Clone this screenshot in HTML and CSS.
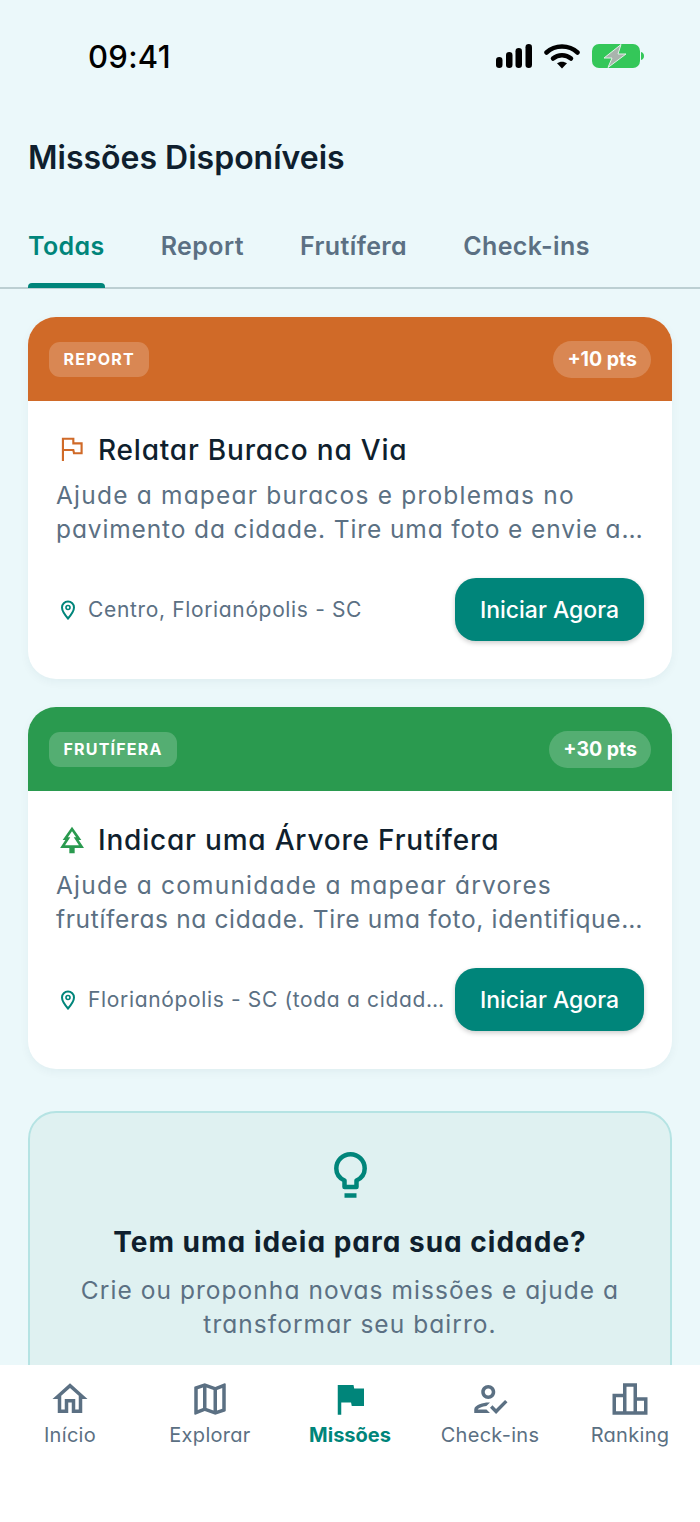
FILE: index.html
```html
<!DOCTYPE html>
<html lang="pt-BR">
<head>
    <meta charset="UTF-8">
    <meta name="viewport" content="width=device-width, initial-scale=1.0">
    <title>Missões Disponíveis</title>
    <link rel="stylesheet" href="styles.css">
</head>
<body>
    <div class="app">
        <div class="status-bar">
            <span class="status-time">09:41</span>
            <div class="status-icons">
                <svg class="icon-signal" viewBox="0 0 36 24" width="36" height="24">
                    <rect x="0" y="13" width="6.500" height="11" rx="3.200"/>
                    <rect x="10" y="8" width="6.500" height="16" rx="3.200"/>
                    <rect x="19.500" y="4" width="6.500" height="20" rx="3.200"/>
                    <rect x="29.500" y="0" width="6.500" height="24" rx="3.200"/>
                </svg>
                <svg class="icon-wifi" viewBox="0 0 36 26" width="36" height="26">
                    <path d="M2.500 9.500C11 1.500 25 1.500 33.500 9.500" />
                    <path d="M9 15.500C14 11 22 11 27 15.500" />
                    <path class="wifi-dot" d="M18 25.500l-5-5.200c2.800-2.200 7.200-2.200 10 0z" />
                </svg>
                <svg class="icon-battery" viewBox="0 0 52 24" width="52" height="24">
                    <rect x="0" y="0" width="48" height="24" rx="7" fill="#34c759"/>
                    <path d="M49 8c2 .500 3 2 3 4s-1 3.500-3 4z" fill="#34c759"/>
                    <path d="M29 0.500L12 14h8l-4 9.500L34 10h-8z" fill="#a9b4ad" stroke="#dff3e6" stroke-width="1"/>
                </svg>
            </div>
        </div>

        <h1 class="page-title">Missões Disponíveis</h1>

        <div class="tabs">
            <span class="tab active">Todas</span>
            <span class="tab">Report</span>
            <span class="tab">Frutífera</span>
            <span class="tab">Check-ins</span>
        </div>

        <main class="content">
            <!-- missoes -->
            <section class="card">
                <div class="card-header orange">
                    <span class="badge">REPORT</span>
                    <span class="points">+10 pts</span>
                </div>
                <div class="card-body">
                    <div class="card-title-row">
                        <svg class="card-icon" viewBox="0 0 24 24" width="32" height="32" fill="none" stroke="#d06a28" stroke-width="1.600">
                            <path d="M5.200 20.300V3.600H13V7H19.200V14.400H13.500L13 12H5.200"/>
                        </svg>
                        <h2 class="card-title">Relatar Buraco na Via</h2>
                    </div>
                    <p class="card-desc">
                        <span class="desc-line">Ajude a mapear buracos e problemas no</span>
                        <span class="desc-line tight">pavimento da cidade. Tire uma foto e envie a…</span>
                    </p>
                    <div class="card-footer">
                        <div class="location">
                            <svg class="pin" viewBox="0 0 14 20" width="14" height="20" fill="none" stroke="#00857a" stroke-width="2">
                                <path d="M7 18.500C4 15 1 11.500 1 7.500a6 6 0 0 1 12 0c0 4-3 7.500-6 11z"/>
                                <circle cx="7" cy="7.500" r="2" stroke-width="1.600"/>
                            </svg>
                            <span class="location-text">Centro, Florianópolis - SC</span>
                        </div>
                        <button class="start-btn">Iniciar Agora</button>
                    </div>
                </div>
            </section>

            <section class="card">
                <div class="card-header green">
                    <span class="badge">FRUTÍFERA</span>
                    <span class="points">+30 pts</span>
                </div>
                <div class="card-body">
                    <div class="card-title-row">
                        <svg class="card-icon" viewBox="0 0 24 24" width="32" height="32" fill="#2a9a4f">
                            <path d="M17 12h2L12 2 5 12h2l-3.900 6h6.900v4h4v-4H21l-4-6zM6.800 16l3.900-6H8.900L12 5.500 15.100 10h-1.800l3.900 6H6.800z"/>
                        </svg>
                        <h2 class="card-title">Indicar uma Árvore Frutífera</h2>
                    </div>
                    <p class="card-desc">
                        <span class="desc-line">Ajude a comunidade a mapear árvores</span>
                        <span class="desc-line tighter">frutíferas na cidade. Tire uma foto, identifique…</span>
                    </p>
                    <div class="card-footer">
                        <div class="location">
                            <svg class="pin" viewBox="0 0 14 20" width="14" height="20" fill="none" stroke="#00857a" stroke-width="2">
                                <path d="M7 18.500C4 15 1 11.500 1 7.500a6 6 0 0 1 12 0c0 4-3 7.500-6 11z"/>
                                <circle cx="7" cy="7.500" r="2" stroke-width="1.600"/>
                            </svg>
                            <span class="location-text">Florianópolis - SC (toda a cidade)</span>
                        </div>
                        <button class="start-btn">Iniciar Agora</button>
                    </div>
                </div>
            </section>

            <section class="idea-card">
                <svg class="idea-icon" viewBox="0 0 33 46" width="33" height="46" fill="none" stroke="#00857a" stroke-width="4.500">
                    <path d="M10.500 35V28.500C5.500 26.200 2.300 21.800 2.300 16.500a14.200 14.200 0 0 1 28.400 0c0 5.300-3.200 9.700-8.200 12V35z" stroke-linejoin="round"/>
                    <path d="M10.500 43.500H22.500" />
                </svg>
                <h3 class="idea-title">Tem uma ideia para sua cidade?</h3>
                <p class="idea-text">Crie ou proponha novas missões e ajude a transformar seu bairro.</p>
            </section>
        </main>

        <nav class="bottom-nav">
            <div class="nav-item">
                <svg viewBox="0 0 24 24" width="42" height="42"><path d="M12 5.690l5 4.500V18h-2v-6H9v6H7v-7.810l5-4.500M12 3L2 12h3v8h6v-6h2v6h6v-8h3L12 3z"/></svg>
                <span>Início</span>
            </div>
            <div class="nav-item">
                <svg viewBox="0 0 24 24" width="42" height="42"><path d="M20.500 3l-.160.030L15 5.100 9 3 3.360 4.900c-.210.070-.360.250-.360.480V20.500c0 .280.220.500.500.500l.160-.030L9 18.900l6 2.100 5.640-1.900c.210-.070.360-.250.360-.480V3.500c0-.280-.220-.500-.500-.500zM10 5.470l4 1.400v11.660l-4-1.400V5.470zm-5 .990l3-1.010v11.700l-3 1.160V6.460zm14 11.080l-3 1.010V6.860l3-1.160v11.840z"/></svg>
                <span>Explorar</span>
            </div>
            <div class="nav-item active">
                <svg viewBox="0 0 24 24" width="42" height="42"><path d="M14.400 6L14 4H5v17h2v-7h5.600l.400 2h7V6z"/></svg>
                <span>Missões</span>
            </div>
            <div class="nav-item">
                <svg viewBox="0 0 24 24" width="42" height="42"><path d="M11 12c2.210 0 4-1.790 4-4s-1.790-4-4-4-4 1.790-4 4 1.790 4 4 4zm0-6c1.100 0 2 .900 2 2s-.900 2-2 2-2-.900-2-2 .900-2 2-2zM5 18c.200-.630 2.570-1.680 4.960-1.940l2.040-2c-.390-.040-.680-.060-1-.060-2.670 0-8 1.340-8 4v2h9l-2-2H5zm15.600-5.500l-5.130 5.170-2.070-2.080L12 17l3.470 3.500L22 13.910z"/></svg>
                <span>Check-ins</span>
            </div>
            <div class="nav-item">
                <svg viewBox="0 0 24 24" width="42" height="42"><path d="M16 11V3H8v6H2v12h20V11h-6zm-6-6h4v14h-4V5zm-6 6h4v8H4v-8zm16 8h-4v-6h4v6z"/></svg>
                <span>Ranking</span>
            </div>
        </nav>
    </div>
</body>
</html>
```

FILE: styles.css
```css
* {
    box-sizing: border-box;
}
body {
    margin: 0;
    font-family: Inter, "Noto Sans", sans-serif;
    font-feature-settings: "cv11";
    color: #0f1f2e;
}
.app {
    width: 700px;
    height: 1522px;
    display: flex;
    flex-direction: column;
    background-color: #ebf8fa;
    overflow: hidden;
}

/* status bar */
.status-bar {
    height: 112px;
    flex-shrink: 0;
    padding: 0 56px 0 88px;
    display: flex;
    align-items: center;
    justify-content: space-between;
}
.status-time {
    font-size: 31px;
    font-weight: 500;
    letter-spacing: 0.3px;
    color: #000;
    font-feature-settings: normal;
}
.status-icons {
    display: flex;
    align-items: center;
    gap: 12px;
}
.icon-wifi path {
    fill: none;
    stroke: #000;
    stroke-width: 4.500;
    stroke-linecap: round;
}
.icon-wifi .wifi-dot {
    fill: #000;
    stroke: none;
}

.page-title {
    margin: 0;
    padding: 0 28px;
    font-size: 32px;
    line-height: 92px;
    height: 90px;
    font-weight: 600;
    flex-shrink: 0;
}

/* tabs */
.tabs {
    display: flex;
    gap: 56px;
    padding: 0 28px;
    height: 87px;
    flex-shrink: 0;
    border-bottom: 2px solid #bccfd2;
}
.tab {
    position: relative;
    padding-top: 26px;
    font-size: 25px;
    line-height: 36px;
    font-weight: 600;
    letter-spacing: 0.400px;
    color: #5b7083;
}
.tab.active {
    color: #00857a;
}
.tab.active::after {
    content: "";
    position: absolute;
    left: 0;
    right: 0;
    bottom: -1px;
    height: 5px;
    background-color: #00857a;
    border-radius: 4px 4px 0 0;
}

/* cards */
.content {
    flex: 1;
    min-height: 0;
    overflow: hidden;
    padding: 28px 28px 0;
}
.card {
    background-color: #fff;
    border-radius: 28px;
    overflow: hidden;
    margin-bottom: 28px;
    box-shadow: 0 3px 10px rgba(0, 60, 70, 0.05);
}
.card-header {
    height: 84px;
    padding: 0 21px;
    display: flex;
    align-items: center;
    justify-content: space-between;
}
.card-header.orange {
    background-color: #d06a28;
}
.card-header.green {
    background-color: #2a9a4f;
}
.badge {
    height: 35px;
    padding: 0 14.500px;
    border-radius: 11px;
    background-color: rgba(255, 255, 255, 0.2);
    color: #fff;
    font-size: 16px;
    line-height: 35px;
    font-weight: 700;
    letter-spacing: 1.200px;
}
.points {
    height: 37px;
    padding: 0 14px;
    border-radius: 19px;
    background-color: rgba(255, 255, 255, 0.2);
    color: #fff;
    font-size: 19.500px;
    line-height: 37px;
    font-weight: 700;
    font-feature-settings: normal;
}
.card-body {
    padding: 28px 28px 38px;
}
.card-title-row {
    display: flex;
    align-items: center;
    gap: 10px;
    height: 42px;
}
.card-icon {
    flex-shrink: 0;
}
.card-title {
    margin: 0;
    font-size: 28px;
    line-height: 42px;
    font-weight: 500;
    letter-spacing: 0.800px;
}
.card-desc {
    margin: 7px 0 0;
    font-size: 24.500px;
    line-height: 34px;
    letter-spacing: 1.200px;
    color: #5b7083;
}
.desc-line {
    display: block;
    white-space: nowrap;
}
.desc-line.tight {
    letter-spacing: 0.880px;
}
.desc-line.tighter {
    letter-spacing: 0.650px;
}
.card-footer {
    margin-top: 32px;
    display: flex;
    align-items: center;
    justify-content: space-between;
    gap: 9px;
}
.location {
    flex: 1;
    min-width: 0;
    display: flex;
    align-items: center;
    gap: 13px;
    padding-left: 5px;
}
.pin {
    flex-shrink: 0;
}
.location-text {
    font-size: 21px;
    letter-spacing: 0.650px;
    color: #5b7083;
    white-space: nowrap;
    overflow: hidden;
    text-overflow: ellipsis;
}
.start-btn {
    width: 189px;
    height: 63px;
    flex-shrink: 0;
    border: none;
    border-radius: 21px;
    background-color: #00857a;
    color: #fff;
    font-family: inherit;
    font-feature-settings: normal;
    font-size: 23px;
    font-weight: 500;
    box-shadow: 0 2px 5px rgba(0, 0, 0, 0.2);
}

/* idea box */
.idea-card {
    margin-top: 42px;
    padding: 39px 30px 0;
    height: 300px;
    border: 2px solid #b5e3e3;
    border-radius: 28px;
    background-color: #dff1f1;
    text-align: center;
}
.idea-icon {
    display: block;
    margin: 0 auto;
}
.idea-title {
    margin: 23px 0 0;
    font-size: 28px;
    line-height: 42px;
    font-weight: 700;
    letter-spacing: 1px;
}
.idea-text {
    margin: 10px 0 0;
    font-size: 24.500px;
    line-height: 34px;
    letter-spacing: 1.050px;
    color: #5b7083;
}

/* bottom nav */
.bottom-nav {
    height: 157px;
    flex-shrink: 0;
    display: grid;
    grid-template-columns: repeat(5, 1fr);
    background-color: #fff;
}
.nav-item {
    padding-top: 13px;
    display: flex;
    flex-direction: column;
    align-items: center;
    font-size: 20px;
    line-height: 30px;
    letter-spacing: 0.300px;
    color: #5b7083;
    fill: #5b7083;
}
.nav-item.active {
    color: #00857a;
    fill: #00857a;
    font-weight: 700;
    letter-spacing: 0;
}
```
